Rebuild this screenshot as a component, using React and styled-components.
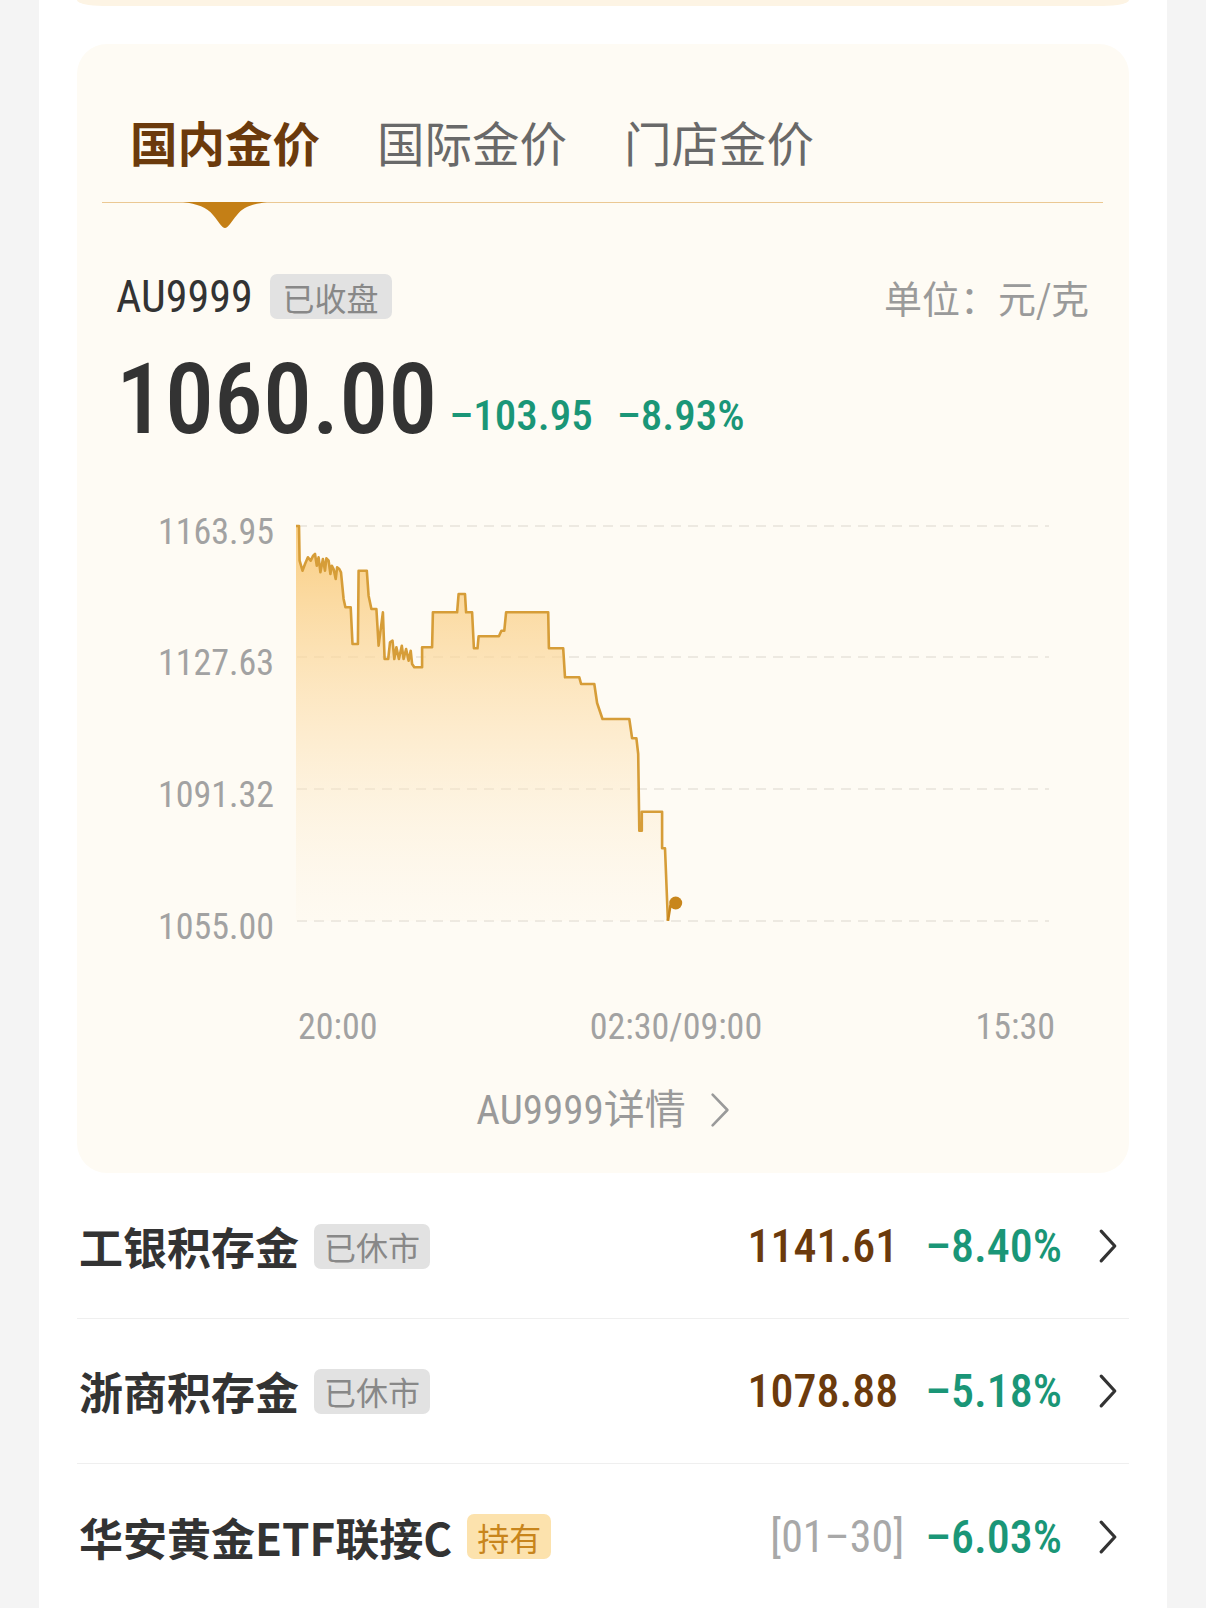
import React from 'react';
import styled, { createGlobalStyle } from 'styled-components';

const NUM = `"Roboto Condensed", "DejaVu Sans Condensed", Roboto, "Noto Sans CJK SC", sans-serif`;
const CJK = `"Noto Sans CJK SC", "Noto Sans", sans-serif`;

const Global = createGlobalStyle`
  html, body { margin: 0; padding: 0; background: #f4f4f4; }
  body { font-family: ${CJK}; }
  * { box-sizing: border-box; }
`;

const Page = styled.div`
  width: 1206px;
  min-height: 1608px;
  padding: 0 39px;
  background: #f4f4f4;
`;

const Panel = styled.div`
  background: #fff;
  min-height: 1608px;
  overflow: hidden;
`;

const PrevCardEdge = styled.div`
  height: 6px;
  margin: 0 38px;
  background: #fdf4e4;
  border-radius: 0 0 26px 26px / 0 0 6px 6px;
`;

const Card = styled.section`
  margin: 38px 38px 0;
  background: #fefbf4;
  border-radius: 30px;
`;

const Tabs = styled.div`
  display: flex;
  gap: 57px;
  margin: 0 26px 0 25px;
  padding: 67px 0 29px 28px;
  border-bottom: 1.5px solid #ebc893;
`;

const Tab = styled.div`
  position: relative;
  font-size: 47.5px;
  line-height: 62px;
  color: ${(p) => (p.$active ? '#6b3a0c' : '#696969')};
  font-weight: ${(p) => (p.$active ? 700 : 400)};
`;

const Pointer = styled.svg`
  position: absolute;
  left: 50%;
  top: calc(100% + 29px);
  transform: translateX(-50%);
  display: block;
`;

const Body = styled.div`
  padding: 0 40px 0 39px;
`;

const QuoteHead = styled.div`
  display: flex;
  align-items: center;
  height: 45px;
  margin-top: 71px;
`;

const Symbol = styled.span`
  font-family: ${NUM};
  font-size: 44px;
  font-weight: 400;
  color: #333;
  line-height: 1;
`;

const Badge = styled.span`
  display: inline-flex;
  align-items: center;
  height: 45px;
  padding: 0 ${(p) => p.$pad || 10}px;
  margin-left: ${(p) => p.$gap || 15}px;
  border-radius: 7px;
  font-size: 32px;
  line-height: 1;
  background: ${(p) => (p.$gold ? '#fce2ad' : '#e2e2e2')};
  color: ${(p) => (p.$gold ? '#c8851c' : '#888')};
`;

const Unit = styled.span`
  margin-left: auto;
  font-size: 38px;
  color: #9a9a9a;
`;

const PriceLine = styled.div`
  display: flex;
  align-items: flex-end;
  margin-top: 31px;
  font-family: ${NUM};
`;

const BigPrice = styled.span`
  font-size: 98px;
  line-height: 100px;
  font-weight: 500;
  color: #333;
`;

const Change = styled.span`
  font-size: 43px;
  line-height: 43px;
  margin-bottom: 13px;
  font-weight: 500;
  color: #1a9677;
  margin-left: ${(p) => p.$gap}px;
`;

const ChartSvg = styled.svg`
  display: block;
  margin-top: 39px;
  text {
    font-family: ${NUM};
    font-size: 36px;
    fill: #a2a2a2;
  }
`;

const DetailLink = styled.div`
  display: flex;
  justify-content: center;
  align-items: center;
  gap: 24px;
  margin-top: 40px;
  padding-bottom: 42px;
  font-family: ${NUM};
  font-size: 41px;
  line-height: 42px;
  color: #9a9a9a;
`;

const List = styled.div`
  margin: 1px 38px 0;
`;

const Row = styled.div`
  display: flex;
  align-items: center;
  height: 145px;
  padding: 0 11px 0 2px;
  border-bottom: 1.5px solid #efefef;
  &:last-child { border-bottom: none; }
`;

const Name = styled.span`
  font-size: 44px;
  font-weight: 700;
  color: #333;
  line-height: 1;
`;

const RightGroup = styled.div`
  margin-left: auto;
  display: flex;
  align-items: center;
  font-family: ${NUM};
  font-size: 46px;
`;

const Value = styled.span`
  color: ${(p) => (p.$muted ? '#a8a8a8' : '#6b3a0c')};
  font-weight: ${(p) => (p.$muted ? 400 : 500)};
  font-size: ${(p) => (p.$muted ? 44 : 46)}px;
  margin-right: ${(p) => p.$gap}px;
`;

const Pct = styled.span`
  color: #1a9677;
  font-weight: 500;
  margin-right: 36px;
`;

const Chevron = ({ color = '#333', w = 20, h = 36, sw = 3.2 }) => (
  <svg width={w} height={h} viewBox={`0 0 ${w} ${h}`} style={{ display: 'block' }}>
    <polyline
      points={`${sw},${sw} ${w - sw},${h / 2} ${sw},${h - sw}`}
      fill="none"
      stroke={color}
      strokeWidth={sw}
      strokeLinecap="round"
      strokeLinejoin="round"
    />
  </svg>
);

const PTS = [
  [219, 37], [222, 37], [222.6, 71.7], [225.5, 81.7], [228, 75], [230.9, 68.3], [233.7, 71.7],
  [236.2, 66.7], [238, 65], [239.8, 76.7], [241.6, 68.3], [243.4, 83.3], [245.9, 70], [248, 81.7],
  [249.4, 69.3], [251.6, 71.7], [253.4, 85], [254.8, 76.7], [256.6, 80], [258.7, 90], [260.1, 78.3],
  [262.3, 80], [264, 83.3], [266.6, 110], [268.4, 118.3], [273.7, 118.3], [275.5, 155], [280.9, 155],
  [281.6, 81.7], [289.8, 81.7], [291.6, 106.7], [294.4, 120], [299.4, 120], [301.6, 156.7],
  [305.9, 123.3], [307.6, 170], [311.2, 170], [313, 153.3], [315.5, 151.7], [317.3, 170],
  [319.4, 158.3], [321.9, 170], [324.8, 156.7], [326.6, 170], [329.1, 160], [331.6, 171.7],
  [333.7, 161.7], [335.1, 175], [337.3, 178.3], [345.1, 178.3], [345.1, 158.3], [355.1, 158.3],
  [355.9, 123.3], [380.1, 123.3], [381.6, 105], [388, 105], [389.1, 123.3], [395.1, 123.3],
  [396.9, 159.3], [400.5, 159.3], [401.6, 147.3], [421.9, 147.3], [424.4, 141.7], [427.3, 141.7],
  [429.1, 123.3], [471.2, 123.3], [471.9, 159.3], [486.2, 159.3], [488, 188.3], [502.3, 188.3],
  [504.1, 195], [517.3, 195], [520.1, 214], [525.5, 230], [552.3, 230], [555.1, 249.3],
  [559.4, 249.3], [561.2, 265], [562.3, 341.7], [564.8, 341.7], [564.8, 322.7], [585.1, 322.7],
  [585.1, 359.3], [588, 359.3], [590.9, 431.7],
];

const linePath = PTS.map((p, i) => `${i ? 'L' : 'M'}${p[0]},${p[1]}`).join(' ');
const areaPath = `${linePath} L590.9,432 L219,432 Z`;

const GRID = [
  { y: 37, label: '1163.95' },
  { y: 168, label: '1127.63' },
  { y: 300, label: '1091.32' },
  { y: 432, label: '1055.00' },
];

const Chart = () => (
  <ChartSvg width="1052" height="560" viewBox="0 0 1052 560">
    <defs>
      <linearGradient id="goldFill" x1="0" y1="0" x2="0" y2="1">
        <stop offset="0" stopColor="#f9c874" stopOpacity="0.9" />
        <stop offset="0.45" stopColor="#fcdca6" stopOpacity="0.6" />
        <stop offset="1" stopColor="#fdf0da" stopOpacity="0.1" />
      </linearGradient>
    </defs>
    {GRID.map((g) => (
      <g key={g.label}>
        <line x1="220" x2="972" y1={g.y} y2={g.y} stroke="#e7e3da" strokeWidth="1.5" strokeDasharray="10 7" />
        <text x="197" y={g.y + 17.5} textAnchor="end">{g.label}</text>
      </g>
    ))}
    <path d={areaPath} fill="url(#goldFill)" />
    <path d={linePath} fill="none" stroke="#d69d38" strokeWidth="2.6" strokeLinejoin="round" />
    <polyline points="590.9,431.7 593.4,416.7 598.7,414" fill="none" stroke="#c8861c" strokeWidth="2.6" />
    <circle cx="598.7" cy="414" r="6.5" fill="#c8861c" />
    <text x="221" y="550" textAnchor="start">20:00</text>
    <text x="599" y="550" textAnchor="middle">02:30/09:00</text>
    <text x="978" y="550" textAnchor="end">15:30</text>
  </ChartSvg>
);

const ROWS = [
  { name: '工银积存金', badge: '已休市', value: '1141.61', pct: '–8.40%', gap: 27 },
  { name: '浙商积存金', badge: '已休市', value: '1078.88', pct: '–5.18%', gap: 27 },
  { name: '华安黄金ETF联接C', badge: '持有', gold: true, value: '[01–30]', muted: true, pct: '–6.03%', gap: 21 },
];

export default function App() {
  return (
    <>
      <Global />
      <Page>
        <Panel>
          <PrevCardEdge />
          <Card>
            <Tabs>
              <Tab $active>
                国内金价
                <Pointer width="84" height="27" viewBox="0 0 84 27">
                  <path
                    d="M0 0 H84 C70 2 60 5 54 13 C48 20 45 26 42 26 C39 26 36 20 30 13 C24 5 14 2 0 0 Z"
                    fill="#c47f16"
                  />
                </Pointer>
              </Tab>
              <Tab>国际金价</Tab>
              <Tab>门店金价</Tab>
            </Tabs>
            <Body>
              <QuoteHead>
                <Symbol>AU9999</Symbol>
                <Badge $pad={13} $gap={17}>已收盘</Badge>
                <Unit>单位：元/克</Unit>
              </QuoteHead>
              <PriceLine>
                <BigPrice>1060.00</BigPrice>
                <Change $gap={12}>–103.95</Change>
                <Change $gap={24}>–8.93%</Change>
              </PriceLine>
            </Body>
            <Chart />
            <DetailLink>
              <span>AU9999详情</span>
              <Chevron color="#9a9a9a" w={20} h={36} sw={2.6} />
            </DetailLink>
          </Card>
          <List>
            {ROWS.map((r) => (
              <Row key={r.name}>
                <Name>{r.name}</Name>
                <Badge $gold={r.gold}>{r.badge}</Badge>
                <RightGroup>
                  <Value $muted={r.muted} $gap={r.gap}>{r.value}</Value>
                  <Pct>{r.pct}</Pct>
                  <Chevron />
                </RightGroup>
              </Row>
            ))}
          </List>
        </Panel>
      </Page>
    </>
  );
}
